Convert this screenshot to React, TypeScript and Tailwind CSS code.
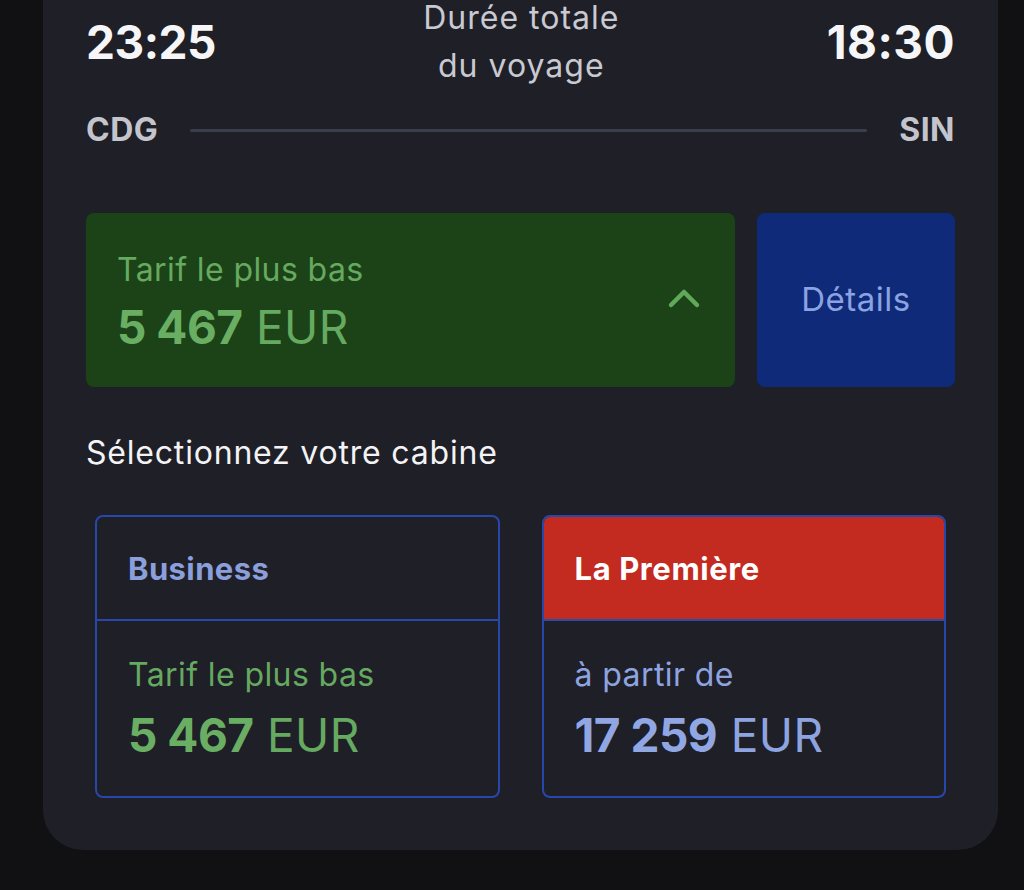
import React from 'react';

const font = { fontFamily: 'Inter, "Noto Sans", sans-serif' };

const ChevronUp: React.FC = () => (
  <svg width="34" height="22" viewBox="0 0 34 22" fill="none">
    <path d="M4 18 L17 5 L30 18" stroke="#5fa95a" strokeWidth="4.5" strokeLinecap="round" strokeLinejoin="round" />
  </svg>
);

const App: React.FC = () => {
  return (
    <div className="w-[1024px] h-[890px] bg-[#111114] overflow-hidden" style={font}>
      <div className="ml-[43px] w-[955px] h-[850px] bg-[#1e1f27] rounded-b-[40px] px-[43px] flex flex-col">
        {/* times */}
        <div className="flex items-center justify-between -mt-[6px]">
          <span className="text-[46px] font-bold text-[#f6f6f8] tracking-[-0.5px]">23:25</span>
          <div className="text-center text-[32px] leading-[48px] tracking-[1px] text-[#c9c9d1]">
            <div>Durée totale</div>
            <div>du voyage</div>
          </div>
          <span className="text-[46px] font-bold text-[#f6f6f8] tracking-[0.5px]">18:30</span>
        </div>

        {/* route */}
        <div className="flex items-center gap-[32px] mt-[16px]">
          <span className="text-[32px] font-bold tracking-[0.5px] text-[#c4c4cc]">CDG</span>
          <div className="flex-1 h-[3px] bg-[#3b3e4c] rounded-full" />
          <span className="text-[32px] font-bold tracking-[0.5px] text-[#c4c4cc]">SIN</span>
        </div>

        {/* fare summary */}
        <div className="flex gap-[22px] mt-[59px] h-[174px]">
          <div className="flex-1 bg-[#1b4317] rounded-[8px] pl-[31px] pr-[34px] flex items-center justify-between">
            <div className="flex flex-col text-[#66a960] pt-[4px]">
              <span className="text-[32px] leading-[40px] tracking-[0.4px]">Tarif le plus bas</span>
              <span className="text-[46px] leading-[56px] mt-[9px] tracking-[0.5px]">
                <span className="font-bold text-[#6aae63] tracking-[-0.5px]">5 467</span> EUR
              </span>
            </div>
            <div className="pb-[4px]">
              <ChevronUp />
            </div>
          </div>
          <div className="w-[198px] bg-[#0f2a78] rounded-[8px] flex items-center justify-center">
            <span className="text-[33px] tracking-[0.5px] text-[#8ba3e2]">Détails</span>
          </div>
        </div>

        <div className="mt-[42px] text-[32px] tracking-[0.8px] text-[#f3f3f5]">Sélectionnez votre cabine</div>

        {/* cabins */}
        <div className="grid grid-cols-2 gap-[42px] px-[9px] mt-[38px]">
          <div className="border-2 border-[#2747ab] rounded-[8px] overflow-hidden">
            <div className="h-[104px] flex items-center px-[31px] border-b-2 border-[#2747ab] pt-[3px]">
              <span className="text-[31px] font-bold tracking-[0.4px] text-[#8b9fdc]">Business</span>
            </div>
            <div className="h-[175px] flex flex-col justify-center px-[31px] pt-[2px]">
              <span className="text-[32px] leading-[40px] tracking-[0.4px] text-[#66a960]">Tarif le plus bas</span>
              <span className="text-[46px] leading-[58px] mt-[11px] tracking-[0.5px] text-[#66a960]">
                <span className="font-bold text-[#6aae63] tracking-[-0.5px]">5 467</span> EUR
              </span>
            </div>
          </div>
          <div className="border-2 border-[#2747ab] rounded-[8px] overflow-hidden">
            <div className="h-[104px] flex items-center px-[31px] bg-[#c32a20] border-b-2 border-[#3048a8] pt-[3px]">
              <span className="text-[31px] font-bold tracking-[0.6px] text-[#ffffff]">La Première</span>
            </div>
            <div className="h-[175px] flex flex-col justify-center px-[31px] pt-[2px]">
              <span className="text-[32px] leading-[40px] tracking-[0.4px] text-[#8ea4e0]">à partir de</span>
              <span className="text-[46px] leading-[58px] mt-[11px] tracking-[0.5px] text-[#8ea4e0]">
                <span className="font-bold text-[#90a7e3] tracking-[-0.5px]">17 259</span> EUR
              </span>
            </div>
          </div>
        </div>
      </div>
    </div>
  );
};

export default App;
